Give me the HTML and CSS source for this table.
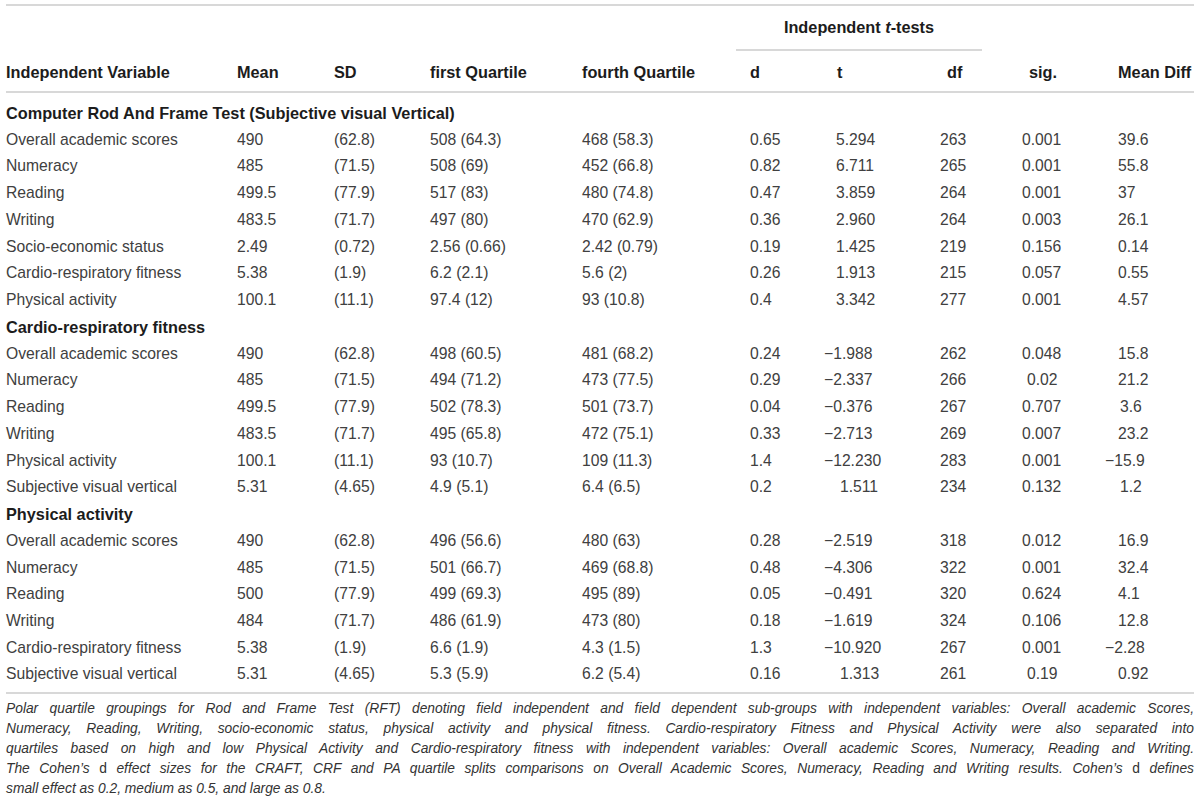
FILE: index.html
```html
<!DOCTYPE html>
<html lang="en">
<head>
<meta charset="utf-8">
<title>Table</title>
<link rel="stylesheet" href="styles.css">
</head>
<body>
<div class="page">
  <table class="tbl">
    <colgroup>
      <col class="c-var"><col class="c-mean"><col class="c-sd"><col class="c-q1"><col class="c-q4">
      <col class="c-d"><col class="c-t"><col class="c-df"><col class="c-sig"><col class="c-md">
    </colgroup>
    <thead>
      <tr class="hr1">
        <th rowspan="2">Independent Variable</th>
        <th rowspan="2">Mean</th>
        <th rowspan="2">SD</th>
        <th rowspan="2">first Quartile</th>
        <th rowspan="2">fourth Quartile</th>
        <th colspan="3" class="span"><div class="spanline">Independent <i>t</i>-tests</div></th>
        <th rowspan="2" class="ph7">sig.</th>
        <th rowspan="2" class="ph13">Mean Diff</th>
      </tr>
      <tr class="hr2">
        <th>d</th>
        <th class="ph13">t</th>
        <th class="ph7">df</th>
      </tr>
    </thead>
    <tbody>
      <tr class="sec first"><td colspan="10">Computer Rod And Frame Test (Subjective visual Vertical)</td></tr>
      <tr><td>Overall academic scores</td><td>490</td><td>(62.8)</td><td>508 (64.3)</td><td>468 (58.3)</td><td>0.65</td><td class="p12">5.294</td><td>263</td><td>0.001</td><td class="p13">39.6</td></tr>
      <tr><td>Numeracy</td><td>485</td><td>(71.5)</td><td>508 (69)</td><td>452 (66.8)</td><td>0.82</td><td class="p12">6.711</td><td>265</td><td>0.001</td><td class="p13">55.8</td></tr>
      <tr><td>Reading</td><td>499.5</td><td>(77.9)</td><td>517 (83)</td><td>480 (74.8)</td><td>0.47</td><td class="p12">3.859</td><td>264</td><td>0.001</td><td class="p13">37</td></tr>
      <tr><td>Writing</td><td>483.5</td><td>(71.7)</td><td>497 (80)</td><td>470 (62.9)</td><td>0.36</td><td class="p12">2.960</td><td>264</td><td>0.003</td><td class="p13">26.1</td></tr>
      <tr><td>Socio-economic status</td><td>2.49</td><td>(0.72)</td><td>2.56 (0.66)</td><td>2.42 (0.79)</td><td>0.19</td><td class="p12">1.425</td><td>219</td><td>0.156</td><td class="p13">0.14</td></tr>
      <tr><td>Cardio-respiratory fitness</td><td>5.38</td><td>(1.9)</td><td>6.2 (2.1)</td><td>5.6 (2)</td><td>0.26</td><td class="p12">1.913</td><td>215</td><td>0.057</td><td class="p13">0.55</td></tr>
      <tr><td>Physical activity</td><td>100.1</td><td>(11.1)</td><td>97.4 (12)</td><td>93 (10.8)</td><td>0.4</td><td class="p12">3.342</td><td>277</td><td>0.001</td><td class="p13">4.57</td></tr>

      <tr class="sec"><td colspan="10">Cardio-respiratory fitness</td></tr>
      <tr><td>Overall academic scores</td><td>490</td><td>(62.8)</td><td>498 (60.5)</td><td>481 (68.2)</td><td>0.24</td><td>&minus;1.988</td><td>262</td><td>0.048</td><td class="p13">15.8</td></tr>
      <tr><td>Numeracy</td><td>485</td><td>(71.5)</td><td>494 (71.2)</td><td>473 (77.5)</td><td>0.29</td><td>&minus;2.337</td><td>266</td><td class="p5">0.02</td><td class="p13">21.2</td></tr>
      <tr><td>Reading</td><td>499.5</td><td>(77.9)</td><td>502 (78.3)</td><td>501 (73.7)</td><td>0.04</td><td>&minus;0.376</td><td>267</td><td>0.707</td><td class="p15">3.6</td></tr>
      <tr><td>Writing</td><td>483.5</td><td>(71.7)</td><td>495 (65.8)</td><td>472 (75.1)</td><td>0.33</td><td>&minus;2.713</td><td>269</td><td>0.007</td><td class="p13">23.2</td></tr>
      <tr><td>Physical activity</td><td>100.1</td><td>(11.1)</td><td>93 (10.7)</td><td>109 (11.3)</td><td>1.4</td><td>&minus;12.230</td><td>283</td><td>0.001</td><td>&minus;15.9</td></tr>
      <tr><td>Subjective visual vertical</td><td>5.31</td><td>(4.65)</td><td>4.9 (5.1)</td><td>6.4 (6.5)</td><td>0.2</td><td class="p16">1.511</td><td>234</td><td>0.132</td><td class="p15">1.2</td></tr>

      <tr class="sec"><td colspan="10">Physical activity</td></tr>
      <tr><td>Overall academic scores</td><td>490</td><td>(62.8)</td><td>496 (56.6)</td><td>480 (63)</td><td>0.28</td><td>&minus;2.519</td><td>318</td><td>0.012</td><td class="p13">16.9</td></tr>
      <tr><td>Numeracy</td><td>485</td><td>(71.5)</td><td>501 (66.7)</td><td>469 (68.8)</td><td>0.48</td><td>&minus;4.306</td><td>322</td><td>0.001</td><td class="p13">32.4</td></tr>
      <tr><td>Reading</td><td>500</td><td>(77.9)</td><td>499 (69.3)</td><td>495 (89)</td><td>0.05</td><td>&minus;0.491</td><td>320</td><td>0.624</td><td class="p13">4.1</td></tr>
      <tr><td>Writing</td><td>484</td><td>(71.7)</td><td>486 (61.9)</td><td>473 (80)</td><td>0.18</td><td>&minus;1.619</td><td>324</td><td>0.106</td><td class="p13">12.8</td></tr>
      <tr><td>Cardio-respiratory fitness</td><td>5.38</td><td>(1.9)</td><td>6.6 (1.9)</td><td>4.3 (1.5)</td><td>1.3</td><td>&minus;10.920</td><td>267</td><td>0.001</td><td>&minus;2.28</td></tr>
      <tr class="last"><td>Subjective visual vertical</td><td>5.31</td><td>(4.65)</td><td>5.3 (5.9)</td><td>6.2 (5.4)</td><td>0.16</td><td class="p16">1.313</td><td>261</td><td class="p5">0.19</td><td class="p13">0.92</td></tr>
    </tbody>
  </table>
  <div class="caption">
    <span class="cl">Polar quartile groupings for Rod and Frame Test (RFT) denoting field independent and field dependent sub-groups with independent variables: Overall academic Scores,</span>
    <span class="cl">Numeracy, Reading, Writing, socio-economic status, physical activity and physical fitness. Cardio-respiratory Fitness and Physical Activity were also separated into</span>
    <span class="cl">quartiles based on high and low Physical Activity and Cardio-respiratory fitness with independent variables: Overall academic Scores, Numeracy, Reading and Writing.</span>
    <span class="cl">The Cohen’s <span class="up">d</span> effect sizes for the CRAFT, CRF and PA quartile splits comparisons on Overall Academic Scores, Numeracy, Reading and Writing results. Cohen’s <span class="up">d</span> defines</span>
    <span class="cl lastline">small effect as 0.2, medium as 0.5, and large as 0.8.</span>
  </div>
</div>
</body>
</html>
```

FILE: styles.css
```css
html, body {
  margin: 0;
  padding: 0;
  background: #ffffff;
}

.page {
  padding: 4px 6px 0 6px;
  font-family: "Liberation Sans", Arial, sans-serif;
  color: #404040;
}

.tbl {
  width: 1188px;
  border-collapse: collapse;
  table-layout: fixed;
  border-top: 2px solid #d8d8d8;
  border-bottom: 2px solid #d8d8d8;
}

.c-var { width: 231px; }
.c-mean { width: 97px; }
.c-sd { width: 96px; }
.c-q1 { width: 152px; }
.c-q4 { width: 168px; }
.c-d { width: 74px; }
.c-t { width: 116px; }
.c-df { width: 82px; }
.c-sig { width: 83px; }
.c-md { width: 89px; }

.tbl th {
  font-weight: bold;
  font-size: 16.3px;
  color: #1c1c1c;
  text-align: left;
  padding: 0;
  white-space: nowrap;
}

.hr1 {
  height: 44px;
}

.hr1 th {
  vertical-align: bottom;
  padding-bottom: 9px;
}

.hr1 th.span {
  vertical-align: top;
  padding: 0;
}

.spanline {
  margin-left: -14px;
  width: 246px;
  text-align: center;
  padding-top: 12px;
  padding-bottom: 13px;
  border-bottom: 2px solid #d8d8d8;
  line-height: 18px;
}

.hr2 {
  height: 41px;
}

.hr2 th {
  vertical-align: bottom;
  padding-bottom: 9px;
}

thead {
  border-bottom: 2px solid #d8d8d8;
}

.tbl td {
  font-size: 15.7px;
  height: 26.75px;
  line-height: 18px;
  padding: 0;
  white-space: nowrap;
  vertical-align: middle;
}

.tbl tr.sec td {
  font-weight: bold;
  font-size: 16.3px;
  color: #1c1c1c;
}

.tbl tr.first td {
  height: 34.2px;
  padding-top: 7.5px;
  box-sizing: border-box;
}

.tbl tr.last td {
  height: 32.25px;
  padding-bottom: 5.5px;
  box-sizing: border-box;
}

.ph7 { padding-left: 7px !important; }
.ph13 { padding-left: 13px !important; }

.tbl td.p5 { padding-left: 5px; }
.tbl td.p12 { padding-left: 12px; }
.tbl td.p13 { padding-left: 13px; }
.tbl td.p15 { padding-left: 15px; }
.tbl td.p16 { padding-left: 16px; }

.caption {
  width: 1188px;
  margin-top: 5px;
  font-style: italic;
  font-size: 13.8px;
  line-height: 20px;
  color: #333333;
}

.cl {
  display: block;
  text-align: justify;
  text-align-last: justify;
}

.cl.lastline {
  text-align-last: left;
}

.up {
  font-style: normal;
}
```
